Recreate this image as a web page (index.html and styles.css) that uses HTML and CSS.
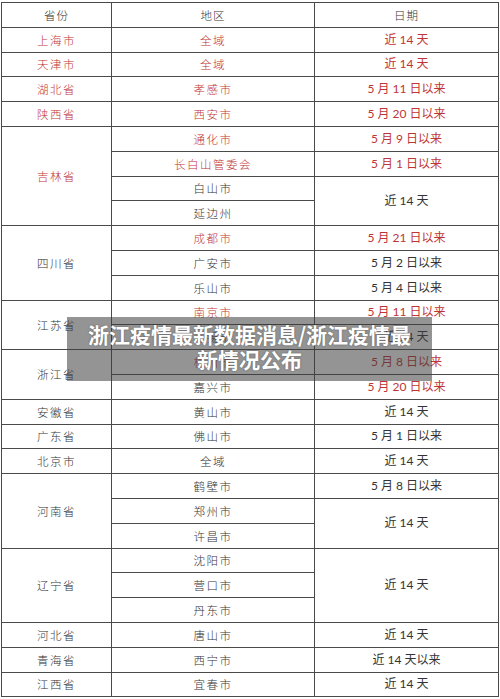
FILE: index.html
```html
<!DOCTYPE html>
<html lang="zh-CN">
<head>
<meta charset="utf-8">
<title>浙江疫情最新数据消息</title>
<link rel="stylesheet" href="styles.css">
</head>
<body>
<div class="page">
<table class="grid">
  <colgroup><col class="c1"><col class="c2"><col class="c3"></colgroup>
  <tr><td class="zh">省份</td><td class="zh">地区</td><td class="zh">日期</td></tr>
  <tr class="red"><td>上海市</td><td>全域</td><td class="d">近 14 天</td></tr>
  <tr class="red"><td>天津市</td><td>全域</td><td class="d">近 14 天</td></tr>
  <tr class="red"><td>湖北省</td><td>孝感市</td><td class="d">5 月 11 日以来</td></tr>
  <tr class="red"><td>陕西省</td><td>西安市</td><td class="d">5 月 20 日以来</td></tr>
  <tr><td rowspan="4" class="r">吉林省</td><td class="r">通化市</td><td class="d r">5 月 9 日以来</td></tr>
  <tr><td class="r">长白山管委会</td><td class="d r">5 月 1 日以来</td></tr>
  <tr><td>白山市</td><td rowspan="2" class="d">近 14 天</td></tr>
  <tr><td>延边州</td></tr>
  <tr><td rowspan="3">四川省</td><td class="r">成都市</td><td class="d r">5 月 21 日以来</td></tr>
  <tr><td>广安市</td><td class="d">5 月 2 日以来</td></tr>
  <tr><td>乐山市</td><td class="d">5 月 4 日以来</td></tr>
  <tr><td rowspan="2">江苏省</td><td class="r">南京市</td><td class="d r">5 月 11 日以来</td></tr>
  <tr><td>无锡市</td><td class="d">近 14 天</td></tr>
  <tr><td rowspan="2">浙江省</td><td class="r">杭州市</td><td class="d r">5 月 8 日以来</td></tr>
  <tr><td>嘉兴市</td><td class="d r">5 月 20 日以来</td></tr>
  <tr><td>安徽省</td><td>黄山市</td><td class="d">近 14 天</td></tr>
  <tr><td>广东省</td><td>佛山市</td><td class="d">5 月 1 日以来</td></tr>
  <tr><td>北京市</td><td>全域</td><td class="d">近 14 天</td></tr>
  <tr><td rowspan="3">河南省</td><td>鹤壁市</td><td class="d">5 月 8 日以来</td></tr>
  <tr><td>郑州市</td><td rowspan="2" class="d">近 14 天</td></tr>
  <tr><td>许昌市</td></tr>
  <tr><td rowspan="3">辽宁省</td><td>沈阳市</td><td rowspan="3" class="d">近 14 天</td></tr>
  <tr><td>营口市</td></tr>
  <tr><td>丹东市</td></tr>
  <tr><td>河北省</td><td>唐山市</td><td class="d">近 14 天</td></tr>
  <tr><td>青海省</td><td>西宁市</td><td class="d">近 14 天以来</td></tr>
  <tr><td>江西省</td><td>宜春市</td><td class="d">近 14 天</td></tr>
</table>
<div class="banner">浙江疫情最新数据消息/浙江疫情最新情况公布</div>
</div>
</body>
</html>
```
FILE: styles.css
```css
html, body {
  margin: 0;
  padding: 0;
  background: #ffffff;
}
.page {
  position: relative;
  width: 500px;
  height: 699px;
  overflow: hidden;
  padding-top: 2px;
  box-sizing: border-box;
}
.grid {
  border-collapse: collapse;
  width: 497px;
  margin-left: 1px;
  table-layout: fixed;
  border: 1px solid #8a8a8a;
}
.c1 { width: 110px; }
.c2 { width: 203px; }
.c3 { width: 184px; }
.grid tr { height: 24.8px; }
.grid td {
  border: 1px solid #4a4a4a;
  padding: 0;
  text-align: center;
  vertical-align: middle;
  font-family: "Noto Sans CJK SC", sans-serif;
  font-size: 11.5px;
  letter-spacing: 1.5px;
  line-height: 14px;
  color: #333;
  font-weight: 300;
}
.grid td.zh { letter-spacing: 1px; }
.grid td.d {
  font-family: "Lato", "Noto Sans CJK SC", sans-serif;
  font-size: 12px;
  letter-spacing: 0;
  font-weight: 400;
}
.red td, .grid td.r { color: #bf3434; }
.banner {
  position: absolute;
  left: 67px;
  top: 317px;
  width: 365px;
  height: 64px;
  box-sizing: border-box;
  padding: 5px 16px 0;
  background: rgba(60, 60, 60, 0.55);
  color: #ffffff;
  font-family: "Noto Sans CJK SC", sans-serif;
  font-weight: 700;
  font-size: 21px;
  line-height: 25px;
  text-align: center;
  text-shadow: 0 0 2px rgba(0,0,0,0.4);
}
```
